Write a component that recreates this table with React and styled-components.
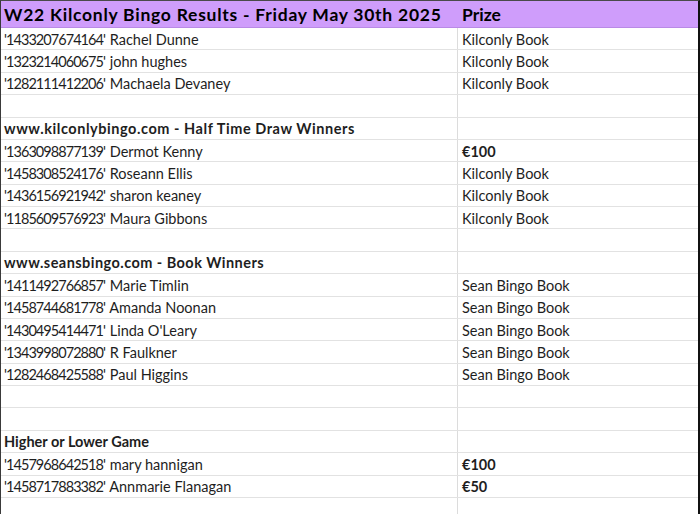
import React from "react";
import styled, { createGlobalStyle } from "styled-components";

const Global = createGlobalStyle`
  html, body { margin: 0; padding: 0; background: #fff; }
  body { font-family: Lato, "Open Sans", sans-serif; }
`;

const Sheet = styled.div`
  width: 697px;
  height: 513px;
  overflow: hidden;
  border-top: 1px solid #4a4a4a;
  border-left: 1px solid #3a3a3a;
  border-right: 2px solid #111;
  background: #fff;
`;

const Row = styled.div`
  display: grid;
  grid-template-columns: 456px 1fr;
  height: ${(p) => (p.$head ? "27px" : "22.38px")};
  box-sizing: border-box;
  border-bottom: 1px solid ${(p) => (p.$head ? "#b98ae6" : "#e2e2e2")};
  background: ${(p) => (p.$head ? "#cf9dfb" : "#fff")};
`;

const Cell = styled.div`
  display: flex;
  align-items: center;
  padding-left: ${(p) => (p.$right ? "4px" : "3px")};
  padding-top: 1px;
  border-left: 1px solid ${(p) => (p.$right && !p.$head ? "#dcdcdc" : "transparent")};
  font-size: ${(p) => (p.$head ? "17.5px" : "14.5px")};
  letter-spacing: ${(p) => (p.$wide ? p.$wide : "0")};
  font-weight: ${(p) => (p.$bold || p.$head ? 700 : 400)};
  color: ${(p) => (p.$head ? "#000" : "#1e1e1e")};
  white-space: pre;
  overflow: hidden;
  ${(p) => !p.$right && "border-left: none;"}
`;

const Id = styled.span`
  letter-spacing: -0.95px;
  margin-right: 1px;
`;

const rows = [
  ["1433207674164", "Rachel Dunne", "Kilconly Book"],
  ["1323214060675", "john hughes", "Kilconly Book"],
  ["1282111412206", "Machaela Devaney", "Kilconly Book"],
  [null, "", ""],
  [null, "www.kilconlybingo.com - Half Time Draw Winners", "", true, false, "0.55px"],
  ["1363098877139", "Dermot Kenny", "€100", false, true],
  ["1458308524176", "Roseann Ellis", "Kilconly Book"],
  ["1436156921942", "sharon keaney", "Kilconly Book"],
  ["1185609576923", "Maura Gibbons", "Kilconly Book"],
  [null, "", ""],
  [null, "www.seansbingo.com - Book Winners", "", true, false, "0.45px"],
  ["1411492766857", "Marie Timlin", "Sean Bingo Book"],
  ["1458744681778", "Amanda Noonan", "Sean Bingo Book"],
  ["1430495414471", "Linda O'Leary", "Sean Bingo Book"],
  ["1343998072880", "R Faulkner", "Sean Bingo Book"],
  ["1282468425588", "Paul Higgins", "Sean Bingo Book"],
  [null, "", ""],
  [null, "", ""],
  [null, "Higher or Lower Game", "", true],
  ["1457968642518", "mary hannigan", "€100", false, true],
  ["1458717883382", "Annmarie Flanagan", "€50", false, true],
  [null, "", ""],
];

export default function App() {
  return (
    <>
      <Global />
      <Sheet>
        <Row $head>
          <Cell $head $wide="0.75px">W22 Kilconly Bingo Results - Friday May 30th 2025</Cell>
          <Cell $head $right>Prize</Cell>
        </Row>
        {rows.map(([id, name, prize, boldA, boldB, wide], i) => (
          <Row key={i}>
            <Cell $bold={boldA} $wide={wide}>
              {id && <Id>'{id}'</Id>}
              {id ? " " + name : name}
            </Cell>
            <Cell $right $bold={boldB}>{prize}</Cell>
          </Row>
        ))}
      </Sheet>
    </>
  );
}
